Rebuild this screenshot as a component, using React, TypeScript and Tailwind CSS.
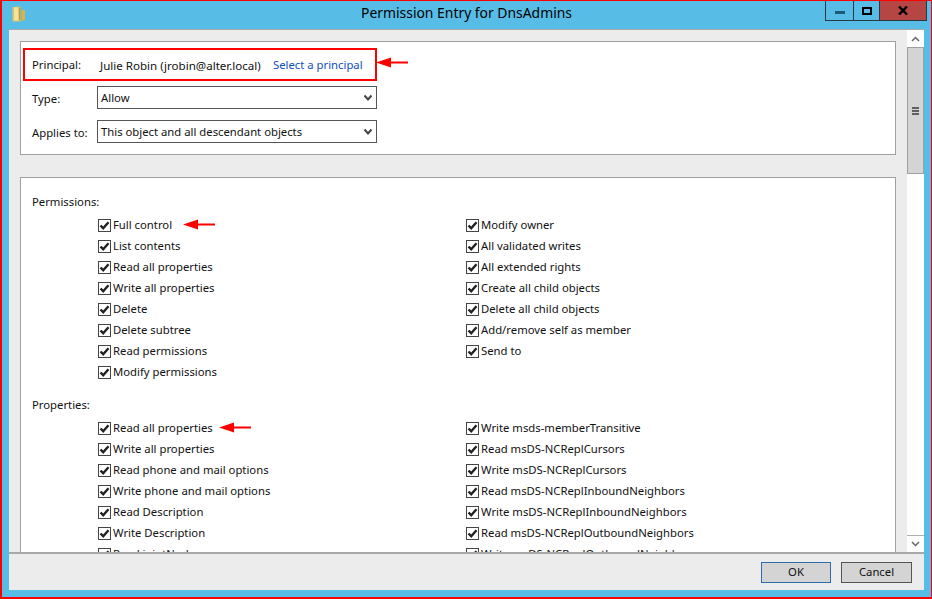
const FONT = "font-['Noto_Sans','Open_Sans',sans-serif]";

function Check() {
  return (
    <span className="w-[13px] h-[13px] shrink-0 border border-[#444] bg-white flex items-center justify-center">
      <svg width="11" height="11" viewBox="0 0 11 11"><path d="M1.5 5.5 L4.2 8.2 L9.5 2.2" fill="none" stroke="#222" strokeWidth="2.4" /></svg>
    </span>
  );
}

function Arrow({ className, left }: { className: string; left: number }) {
  return (
    <svg className={className} style={{ left }} width="33" height="11" viewBox="0 0 33 11">
      <path d="M0 5.5 L15 0.5 L15 4.5 L32 4.5 L32 6.5 L15 6.5 L15 10.5 Z" fill="#f00" />
    </svg>
  );
}

function Item({ label, arrow }: { label: string; arrow?: number }) {
  return (
    <div className="relative h-[21px] flex items-center gap-[2px] whitespace-nowrap">
      <Check />
      <span>{label}</span>
      {arrow !== undefined && <Arrow className="absolute top-[4px]" left={arrow} />}
    </div>
  );
}

function Select({ value }: { value: string }) {
  return (
    <div className="w-[280px] h-[23px] border border-[#555] bg-white flex items-center justify-between pl-[3px] pr-[3px]">
      <span className="pt-[1px]">{value}</span>
      <svg width="10" height="8" viewBox="0 0 10 8"><path d="M1.5 1.5 L5 5.5 L8.5 1.5" fill="none" stroke="#444" strokeWidth="2" /></svg>
    </div>
  );
}

function Column({ items }: { items: [string, number?][] }) {
  return (
    <div className="w-[368px] flex flex-col">
      {items.map(([l, a]) => <Item key={l} label={l} arrow={a} />)}
    </div>
  );
}

const perms1: [string, number?][] = [["Full control", 85], ["List contents"], ["Read all properties"], ["Write all properties"], ["Delete"], ["Delete subtree"], ["Read permissions"], ["Modify permissions"]];
const perms2: [string, number?][] = [["Modify owner"], ["All validated writes"], ["All extended rights"], ["Create all child objects"], ["Delete all child objects"], ["Add/remove self as member"], ["Send to"]];
const props1: [string, number?][] = [["Read all properties", 121], ["Write all properties"], ["Read phone and mail options"], ["Write phone and mail options"], ["Read Description"], ["Write Description"], ["Read jointNode"]];
const props2: [string, number?][] = [["Write msds-memberTransitive"], ["Read msDS-NCReplCursors"], ["Write msDS-NCReplCursors"], ["Read msDS-NCReplInboundNeighbors"], ["Write msDS-NCReplInboundNeighbors"], ["Read msDS-NCReplOutboundNeighbors"], ["Write msDS-NCReplOutboundNeighbors"]];

export default function App() {
  return (
    <div className={`${FONT} w-[932px] h-[599px] overflow-hidden bg-[#57bde6] border-2 border-r-[1px] border-t-[1px] border-[#f00] flex flex-col text-[11.3px] text-[#111]`}>
      <div className="relative h-[28px] shrink-0 flex items-center justify-center text-[13.9px] text-black">
        <svg className="absolute left-[10px] top-[5px]" width="14" height="16" viewBox="0 0 14 16">
          <path d="M0.5 1 L8.5 0.5 L9 15.5 L0.5 15.5 Z" fill="#e3c566" />
          <path d="M2 1.5 L6 1.5 L6.5 14.5 L2 14.5 Z" fill="#f3e39a" />
          <path d="M7 1.5 L8.5 1.5 L8.5 14.5 L7 14.5 Z" fill="#b89a4a" />
          <path d="M9.5 4 L13 4 L13 14 L9.5 15 Z" fill="#d6b44e" />
        </svg>
        <span className="pb-[3px]">Permission Entry for DnsAdmins</span>
        <div className="absolute right-[4px] top-0 h-[20px] flex border border-t-0 border-[#2a3a44]">
          <div className="w-[28px] border-r border-[#2a3a44] flex items-center justify-center">
            <span className="w-[10px] h-[3px] bg-[#1e5a78] mt-[3px]" />
          </div>
          <div className="w-[26px] border-r border-[#2a3a44] flex items-center justify-center">
            <span className="w-[10px] h-[8px] border-2 border-black" />
          </div>
          <div className="w-[46px] bg-[#b54644] flex items-center justify-center">
            <svg width="10" height="9" viewBox="0 0 10 9"><path d="M1 0.5 L9 8.5 M9 0.5 L1 8.5" stroke="#000" strokeWidth="2.4" /></svg>
          </div>
        </div>
      </div>

      <div className="ml-[7px] mr-[7px] h-[561px] shrink-0 bg-[#ececec] border-t border-[#a8a8a8] flex flex-col">
        <div className="flex-1 min-h-0 flex">
          <div className="flex-1 min-w-0 overflow-hidden pl-[11px] pr-[11px] pt-[11px]">
            <div className="h-[114px] bg-white border border-[#a0a0a0] pl-[2px] pt-[6px] pr-[2px]">
              <div className="relative w-[354px] h-[33px] border-2 border-[#f00] flex items-center pt-[2px]">
                <span className="w-[75px] pl-[7px] shrink-0">Principal:</span>
                <span className="w-[173px] shrink-0 text-[11.55px]">Julie Robin (jrobin@alter.local)</span>
                <span className="text-[#0f4fc0]">Select a principal</span>
                <Arrow className="absolute top-[7px]" left={351} />
              </div>
              <div className="mt-[5px] h-[23px] flex items-center">
                <span className="w-[74px] pl-[9px] pt-[3px] shrink-0">Type:</span>
                <Select value="Allow" />
              </div>
              <div className="mt-[11px] h-[23px] flex items-center">
                <span className="w-[74px] pl-[9px] pt-[3px] shrink-0">Applies to:</span>
                <Select value="This object and all descendant objects" />
              </div>
            </div>
            <div className="mt-[22px] h-[420px] bg-white border border-[#a0a0a0] pl-[11px] pt-[14px]">
              <div className="h-[19px] leading-[19px]">Permissions:</div>
              <div className="flex pl-[66px] mt-[4px]">
                <Column items={perms1} />
                <Column items={perms2} />
              </div>
              <div className="h-[19px] leading-[19px] mt-[12px]">Properties:</div>
              <div className="flex pl-[66px] mt-[4px]">
                <Column items={props1} />
                <Column items={props2} />
              </div>
            </div>
          </div>
          <div className="w-[17px] shrink-0 bg-white flex flex-col">
            <div className="h-[17px] flex items-center justify-center">
              <svg width="9" height="6" viewBox="0 0 9 6"><path d="M1 5 L4.5 1.5 L8 5" fill="none" stroke="#666" strokeWidth="1.5" /></svg>
            </div>
            <div className="h-[127px] bg-[#d4d4d4] border border-[#a0a0a0] flex flex-col items-center justify-center gap-[1px]">
              <span className="w-[7px] h-[2px] bg-[#606060]" />
              <span className="w-[7px] h-[2px] bg-[#606060]" />
              <span className="w-[7px] h-[2px] bg-[#606060]" />
            </div>
            <div className="flex-1" />
            <div className="h-[17px] border-t border-[#b0b0b0] flex items-center justify-center">
              <svg width="9" height="6" viewBox="0 0 9 6"><path d="M1 1 L4.5 4.5 L8 1" fill="none" stroke="#666" strokeWidth="1.5" /></svg>
            </div>
          </div>
        </div>
        <div className="h-[38px] shrink-0 border-t-2 border-[#a8a8a8] flex items-start justify-end gap-[10px] pt-[8px] pr-[12px]">
          <div className="w-[70px] h-[21px] bg-[#d4d4d4] border border-[#2b6cab] flex items-center justify-center">OK</div>
          <div className="w-[71px] h-[21px] bg-[#d4d4d4] border border-[#555] flex items-center justify-center">Cancel</div>
        </div>
      </div>
    </div>
  );
}
